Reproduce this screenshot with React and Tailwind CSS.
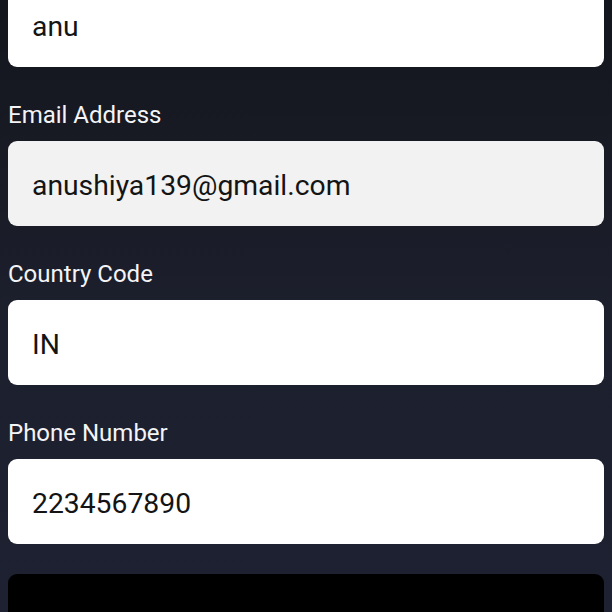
const fields = [
  { label: null, value: 'anu', bg: 'bg-white' },
  { label: 'Email Address', value: 'anushiya139@gmail.com', bg: 'bg-[#f2f2f2]' },
  { label: 'Country Code', value: 'IN', bg: 'bg-white' },
  { label: 'Phone Number', value: '2234567890', bg: 'bg-white' },
]

function Field({ label, value, bg }) {
  return (
    <div>
      {label && (
        <label className="block mt-[34px] mb-[12px] text-[24px] leading-[28px] text-[#f4f4f6]">{label}</label>
      )}
      <div className={`${bg} h-[85px] rounded-[9px] px-6 pt-[5px] flex items-center text-[28.3px] text-[#141414]`}>
        {value}
      </div>
    </div>
  )
}

export default function App() {
  return (
    <div
      className="h-[612px] overflow-hidden bg-gradient-to-b from-[#14161d] via-[#1c1f2c] to-[#1e2131] px-2"
      style={{ fontFamily: 'Roboto, "Noto Sans", sans-serif' }}
    >
      <div className="-mt-[18px]">
        {fields.map((f, i) => (
          <Field key={i} {...f} />
        ))}
        <button className="mt-[30px] w-full h-[84px] rounded-[9px] bg-black" />
      </div>
    </div>
  )
}
